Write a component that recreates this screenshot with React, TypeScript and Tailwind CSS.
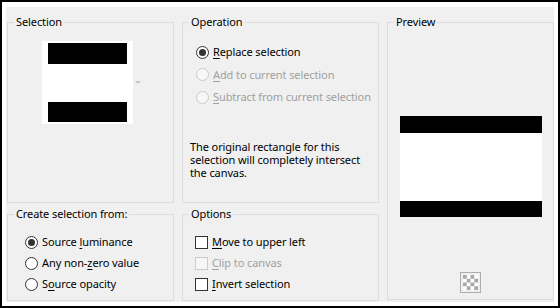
import type { ReactNode } from "react";

// Texto com a letra de atalho sublinhada, como nos dialogos do Windows.
function Mnemonic({ text, at }: { text: string; at: number }) {
  return (
    <>
      {text.slice(0, at)}
      <u className="underline-offset-[2px]">{text[at]}</u>
      {text.slice(at + 1)}
    </>
  );
}

type OptionProps = {
  label: ReactNode;
  checked?: boolean;
  disabled?: boolean;
};

function Radio({ label, checked, disabled }: OptionProps) {
  return (
    <div className="flex items-center gap-[4px]">
      <span
        className={`flex h-[13px] w-[13px] shrink-0 items-center justify-center rounded-full border ${
          disabled ? "border-[#cccccc] bg-[#f7f7f7]" : "border-[#333333] bg-white"
        }`}
      >
        {checked && <span className="h-[7px] w-[7px] rounded-full bg-[#333333]" />}
      </span>
      <span className={disabled ? "text-[#a0a0a0]" : "text-black"}>{label}</span>
    </div>
  );
}

function Checkbox({ label, disabled }: OptionProps) {
  return (
    <div className="flex items-center gap-[4px]">
      <span
        className={`h-[13px] w-[13px] shrink-0 border ${
          disabled ? "border-[#cccccc] bg-[#f7f7f7]" : "border-[#333333] bg-white"
        }`}
      />
      <span className={disabled ? "text-[#a0a0a0]" : "text-black"}>{label}</span>
    </div>
  );
}

function GroupBox({
  title,
  className,
  children,
}: {
  title: string;
  className?: string;
  children: ReactNode;
}) {
  return (
    <fieldset className={`min-w-0 border border-[#dcdcdc] ${className ?? ""}`}>
      <legend className="ml-[6px] px-[2px] leading-[16px]">{title}</legend>
      {children}
    </fieldset>
  );
}

export default function App() {
  return (
    <div className="h-[308px] w-[560px] border-2 border-black bg-white pb-[4px] pl-[4px] pr-[4px] pt-[5px]">
      <div className="h-[295px] w-[548px] whitespace-nowrap bg-[#f0f0f0] pl-[1px] pt-[7px] font-['Segoe_UI','Noto_Sans',sans-serif] text-[11px] tracking-[-0.1px] text-black">
        <div className="grid grid-cols-[167px_197px_167px] grid-rows-[189px_95px] gap-x-[8px] gap-y-[3px]">
          <GroupBox title="Selection" className="col-start-1 row-start-1">
            <div className="flex pl-[34px] pt-[11px]">
              <div className="flex h-[83px] w-[91px] flex-col bg-white px-[6px] py-[2px]">
                <div className="h-[21px] bg-black" />
                <div className="h-[38px] bg-white" />
                <div className="h-[20px] bg-black" />
              </div>
              <span className="ml-[2px] h-0 w-0 self-center border-l-[3px] border-r-[3px] border-t-[3px] border-l-transparent border-r-transparent border-t-[#c4c4c4]" />
            </div>
          </GroupBox>

          <GroupBox title="Operation" className="col-start-2 row-start-1">
            <div className="flex flex-col pl-[13px] pt-[11px]">
              <div className="flex h-[22.5px] items-center">
                <Radio checked label={<Mnemonic text="Replace selection" at={0} />} />
              </div>
              <div className="flex h-[22.5px] items-center">
                <Radio disabled label={<Mnemonic text="Add to current selection" at={0} />} />
              </div>
              <div className="flex h-[22.5px] items-center">
                <Radio disabled label={<Mnemonic text="Subtract from current selection" at={0} />} />
              </div>
            </div>
            <p className="mt-[31px] pl-[7px] leading-[13px]">
              The original rectangle for this
              <br />
              selection will completely intersect
              <br />
              the canvas.
            </p>
          </GroupBox>

          <GroupBox title="Preview" className="col-start-3 row-span-2 row-start-1 h-[286px]">
            <div className="flex flex-col items-center">
              <div className="mt-[86px] flex h-[101px] w-[142px] flex-col bg-white">
                <div className="h-[17px] bg-black" />
                <div className="h-[68px] bg-white" />
                <div className="h-[16px] bg-black" />
              </div>
              <div className="mt-[55px] h-[21px] w-[21px] border border-[#adadad] bg-[#f0f0f0] p-[2px]">
                <svg width="15" height="15" viewBox="0 0 16 16">
                  <rect width="16" height="16" fill="#ffffff" />
                  <rect x="0" y="0" width="4" height="4" fill="#a8a8a8" />
                  <rect x="8" y="0" width="4" height="4" fill="#a8a8a8" />
                  <rect x="4" y="4" width="4" height="4" fill="#a8a8a8" />
                  <rect x="12" y="4" width="4" height="4" fill="#a8a8a8" />
                  <rect x="0" y="8" width="4" height="4" fill="#a8a8a8" />
                  <rect x="8" y="8" width="4" height="4" fill="#a8a8a8" />
                  <rect x="4" y="12" width="4" height="4" fill="#a8a8a8" />
                  <rect x="12" y="12" width="4" height="4" fill="#a8a8a8" />
                </svg>
              </div>
            </div>
          </GroupBox>

          <GroupBox title="Create selection from:" className="col-start-1 row-start-2">
            <div className="flex flex-col pl-[17px] pt-[9.5px]">
              <div className="flex h-[21px] items-center">
                <Radio checked label={<Mnemonic text="Source luminance" at={7} />} />
              </div>
              <div className="flex h-[21px] items-center">
                <Radio label={<Mnemonic text="Any non-zero value" at={8} />} />
              </div>
              <div className="flex h-[21px] items-center">
                <Radio label={<Mnemonic text="Source opacity" at={1} />} />
              </div>
            </div>
          </GroupBox>

          <GroupBox title="Options" className="col-start-2 row-start-2">
            <div className="flex flex-col pl-[12px] pt-[9.5px]">
              <div className="flex h-[21px] items-center">
                <Checkbox label={<Mnemonic text="Move to upper left" at={0} />} />
              </div>
              <div className="flex h-[21px] items-center">
                <Checkbox disabled label={<Mnemonic text="Clip to canvas" at={0} />} />
              </div>
              <div className="flex h-[21px] items-center">
                <Checkbox label={<Mnemonic text="Invert selection" at={0} />} />
              </div>
            </div>
          </GroupBox>
        </div>
      </div>
    </div>
  );
}
